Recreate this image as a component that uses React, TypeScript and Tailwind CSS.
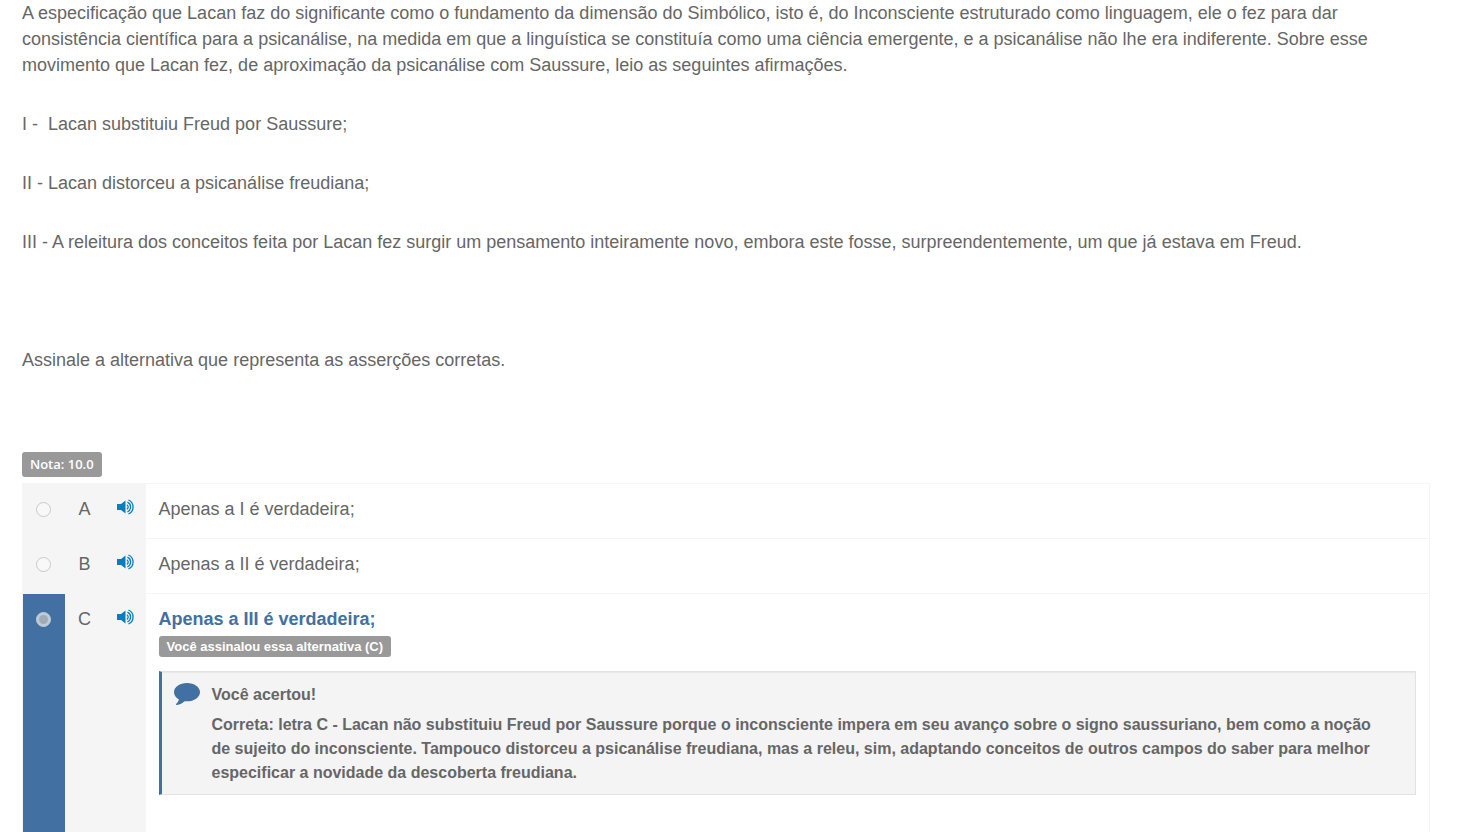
import { useState } from "react";

const STATEMENTS = [
  "I -\u00a0 Lacan substituiu Freud por Saussure;",
  "II - Lacan distorceu a psicanálise freudiana;",
  "III - A releitura dos conceitos feita por Lacan fez surgir um pensamento inteiramente novo, embora este fosse, surpreendentemente, um que já estava em Freud.",
];

const OPTIONS = [
  { letter: "A", text: "Apenas a I é verdadeira;" },
  { letter: "B", text: "Apenas a II é verdadeira;" },
  { letter: "C", text: "Apenas a III é verdadeira;" },
];

const MARKED = "C";

function VolumeIcon() {
  return (
    <svg width="18" height="16" viewBox="0 0 18 16" fill="none" aria-hidden="true">
      <path d="M0 5h4L8.500 1.500v13L4 11H0z" fill="currentColor" />
      <g stroke="currentColor" strokeWidth="1.3">
        <path d="M9.800 5.700a2.600 2.600 0 0 1 0 4.600" />
        <path d="M10.400 3.200a5.200 5.200 0 0 1 0 9.600" />
        <path d="M11.400 1a7.600 7.600 0 0 1 0 14" />
      </g>
    </svg>
  );
}

function CommentIcon() {
  return (
    <svg width="26" height="22" viewBox="0 0 26 22" fill="currentColor" aria-hidden="true">
      <path d="M13 0C5.8 0 0 4.1 0 9.2c0 2.9 1.9 5.5 4.9 7.2-.5 1.8-1.3 2.9-2.4 4-.3.3-.6.6-.5 1 .1.4.4.6.8.6 3.1-.5 5.800-1.900 7.900-3.800.7.1 1.500.1 2.300.1 7.200 0 13-4.100 13-9.100S20.200 0 13 0z" />
    </svg>
  );
}

function Feedback() {
  return (
    <div
      className="
        mt-[14px] flex gap-3
        border border-[#e3e3e3] border-l-3 border-l-[#4270a3]
        bg-[#f4f4f4]
        shadow-[inset_0_1px_1px_rgba(0,0,0,0.05)]
        pt-[11px] pb-[9px] pl-3 pr-6
        font-bold text-base leading-6
      "
    >
      <div className="shrink-0 text-[#4270a3]">
        <CommentIcon />
      </div>
      <div>
        <p>Você acertou!</p>
        <p className="mt-[6px]">
          Correta: letra C - Lacan não substituiu Freud por Saussure porque o
          inconsciente impera em seu avanço sobre o signo saussuriano, bem como a
          noção de sujeito do inconsciente. Tampouco distorceu a psicanálise
          freudiana, mas a releu, sim, adaptando conceitos de outros campos do
          saber para melhor especificar a novidade da descoberta freudiana.
        </p>
      </div>
    </div>
  );
}

export default function App() {
  const [speaking, setSpeaking] = useState("");

  return (
    <main className="bg-white pl-[22px] pr-[30px] font-['Liberation_Sans',Arial,sans-serif] text-lg leading-[26px] text-[#666]">
      {/* QUESTION */}
      <div className="space-y-[33px]">
        <p>
          A especificação que Lacan faz do significante como o fundamento da
          dimensão do Simbólico, isto é, do Inconsciente estruturado como
          linguagem, ele o fez para dar consistência científica para a
          psicanálise, na medida em que a linguística se constituía como uma
          ciência emergente, e a psicanálise não lhe era indiferente. Sobre esse
          movimento que Lacan fez, de aproximação da psicanálise com Saussure,
          leio as seguintes afirmações.
        </p>
        {STATEMENTS.map((statement) => (
          <p key={statement}>{statement}</p>
        ))}
        <p>&nbsp;</p>
        <p>Assinale a alternativa que representa as asserções corretas.</p>
      </div>

      {/* SCORE */}
      <div className="mt-[79px] flex">
        <span className="rounded-[3px] bg-[#999] px-2 font-['Open_Sans',sans-serif] text-[13px] leading-[25px] font-semibold text-white">
          Nota: 10.0
        </span>
      </div>

      {/* OPTIONS */}
      <table className="mt-[6px] w-full border-collapse border border-[#f5f5f5]">
        <tbody>
          {OPTIONS.map(({ letter, text }) => {
            const marked = letter === MARKED;
            return (
              <tr key={letter} className="h-[55px] align-top">
                <td className={`w-[42px] pt-[18px] ${marked ? "bg-[#4270a3]" : "bg-[#f5f5f5]"}`}>
                  <input
                    type="radio"
                    id={`option-${letter}`}
                    name="answer"
                    defaultChecked={marked}
                    disabled
                    className={`
                      mx-auto grid size-[15px] appearance-none place-content-center rounded-full border
                      before:size-[9px] before:rounded-full
                      ${marked ? "border-[#c0cbd6] bg-[#c0cbd6] before:bg-[#9fabb8]" : "border-[#c9c9c9] bg-[#f8f8f8]"}
                    `}
                  />
                </td>
                <td className="w-10 bg-[#f5f5f5] pt-3 text-center">{letter}</td>
                <td className="w-[41px] bg-[#f5f5f5] pt-[15px] pl-3">
                  <button
                    type="button"
                    aria-label={`Ouvir alternativa ${letter}`}
                    aria-pressed={speaking === letter}
                    onClick={() => setSpeaking(letter)}
                    className="block cursor-pointer text-[#0a7ebd]"
                  >
                    <VolumeIcon />
                  </button>
                </td>
                <td className={`border-t border-[#f5f5f5] px-[13px] pt-3 ${marked ? "pb-10" : ""}`}>
                  <label
                    htmlFor={`option-${letter}`}
                    className={`block ${marked ? "font-bold text-[#4270a3]" : ""}`}
                  >
                    {text}
                  </label>
                  {marked && (
                    <>
                      <div className="mt-1 flex">
                        <span className="rounded-[3px] bg-[#999] px-2 text-[13px] leading-[21px] font-bold text-white">
                          Você assinalou essa alternativa (C)
                        </span>
                      </div>
                      <Feedback />
                    </>
                  )}
                </td>
              </tr>
            );
          })}
        </tbody>
      </table>
    </main>
  );
}
